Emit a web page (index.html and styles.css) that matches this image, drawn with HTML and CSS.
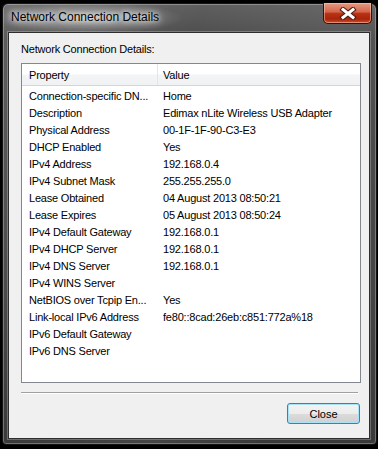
FILE: index.html
```html
<!DOCTYPE html>
<html lang="en">
<head>
  <meta charset="UTF-8">
  <title>Network Connection Details</title>
  <link rel="stylesheet" href="styles.css">
</head>
<body>
  <!-- Dialog window -->
  <div class="window">
    <div class="titlebar">
      <span class="title">Network Connection Details</span>
      <button class="caption-close" aria-label="Close">
        <svg width="18" height="13" viewBox="0 0 18 13">
          <path d="M4 2.5 L14 10.5 M14 2.5 L4 10.5" stroke="#4a1d14" stroke-width="5" stroke-linecap="square"/>
          <path d="M4 2.5 L14 10.5 M14 2.5 L4 10.5" stroke="#ffffff" stroke-width="3" stroke-linecap="square"/>
        </svg>
      </button>
    </div>

    <div class="client">
      <p class="label">Network Connection Details:</p>

      <!-- Property list -->
      <div class="listview">
        <div class="lv-header">
          <div class="lv-col first">Property</div>
          <div class="lv-col">Value</div>
        </div>
        <div class="lv-body">
          <div class="lv-row"><span>Connection-specific DN...</span><span>Home</span></div>
          <div class="lv-row"><span>Description</span><span>Edimax nLite Wireless USB Adapter</span></div>
          <div class="lv-row"><span>Physical Address</span><span>00-1F-1F-90-C3-E3</span></div>
          <div class="lv-row"><span>DHCP Enabled</span><span>Yes</span></div>
          <div class="lv-row"><span>IPv4 Address</span><span>192.168.0.4</span></div>
          <div class="lv-row"><span>IPv4 Subnet Mask</span><span>255.255.255.0</span></div>
          <div class="lv-row"><span>Lease Obtained</span><span>04 August 2013 08:50:21</span></div>
          <div class="lv-row"><span>Lease Expires</span><span>05 August 2013 08:50:24</span></div>
          <div class="lv-row"><span>IPv4 Default Gateway</span><span>192.168.0.1</span></div>
          <div class="lv-row"><span>IPv4 DHCP Server</span><span>192.168.0.1</span></div>
          <div class="lv-row"><span>IPv4 DNS Server</span><span>192.168.0.1</span></div>
          <div class="lv-row"><span>IPv4 WINS Server</span><span></span></div>
          <div class="lv-row"><span>NetBIOS over Tcpip En...</span><span>Yes</span></div>
          <div class="lv-row"><span>Link-local IPv6 Address</span><span>fe80::8cad:26eb:c851:772a%18</span></div>
          <div class="lv-row"><span>IPv6 Default Gateway</span><span></span></div>
          <div class="lv-row"><span>IPv6 DNS Server</span><span></span></div>
        </div>
      </div>

      <hr class="separator">

      <div class="actions">
        <button class="btn default">Close</button>
      </div>
    </div>
  </div>
</body>
</html>
```

FILE: styles.css
```css
/* Reset */
* {
  margin: 0;
  padding: 0;
  box-sizing: border-box;
}
html, body {
  width: 100%;
  height: 100%;
  background: #000;
  overflow: hidden;
}
body {
  padding: 3px 1px 4px 2px;
  font-family: "Liberation Sans", Arial, sans-serif;
  color: #000;
}

/* Aero window frame */
.window {
  width: 375px;
  height: 442px;
  display: flex;
  flex-direction: column;
  padding: 0 6px 5px 5px;
  border: 1px solid #141414;
  border-radius: 6px 6px 4px 4px;
  background:
    radial-gradient(ellipse 95px 16px at 85px 14px, rgba(235,235,235,0.55) 0%, rgba(200,200,200,0.25) 60%, rgba(255,255,255,0) 100%),
    linear-gradient(115deg, rgba(255,255,255,0.10) 0%, rgba(255,255,255,0) 35%, rgba(255,255,255,0.06) 60%, rgba(255,255,255,0) 80%),
    linear-gradient(to bottom, #5f5f5f 0%, #4c4c4c 8%, #464646 60%, #3a3a3a 100%);
  box-shadow: inset 0 0 0 1px rgba(255,255,255,0.28);
}

.titlebar {
  height: 28px;
  display: flex;
  justify-content: space-between;
  align-items: flex-start;
}
.title {
  margin: 5px 0 0 3px;
  font-size: 12px;
  line-height: 16px;
  color: #000;
  text-shadow: 0 0 5px #fff, 0 0 9px rgba(255,255,255,0.9), 0 0 14px rgba(255,255,255,0.7);
}
.caption-close {
  width: 49px;
  height: 21px;
  margin: -1px -2px 0 0;
  display: flex;
  align-items: center;
  justify-content: center;
  border: 1px solid #3b0f08;
  border-top: none;
  border-radius: 0 0 5px 5px;
  background: linear-gradient(to bottom, #e49c86 0%, #d2654a 45%, #bb3216 52%, #a92409 80%, #c9502f 100%);
  box-shadow: inset 0 0 0 1px rgba(255,210,190,0.5);
}

/* Client area */
.client {
  flex: 1;
  display: flex;
  flex-direction: column;
  padding: 9px 8px 0 12px;
  background: #f0f0f0;
  border: 1px solid #2e2e2e;
  box-shadow: 0 0 0 1px rgba(255,255,255,0.25);
}
.label {
  font-size: 11px;
  line-height: 15px;
  letter-spacing: -0.2px;
}

/* List view */
.listview {
  margin-top: 6px;
  height: 320px;
  background: #fff;
  border: 1px solid #828790;
  font-size: 11px;
  letter-spacing: -0.2px;
}
.lv-header {
  height: 22px;
  display: grid;
  grid-template-columns: 136px 1fr;
  align-items: center;
  background: linear-gradient(to bottom, #ffffff 0%, #ffffff 45%, #f3f4f6 55%, #f1f2f4 100%);
  border-bottom: 1px solid #d5d5d5;
}
.lv-col {
  height: 100%;
  display: flex;
  align-items: center;
  padding-left: 5px;
}
.lv-col.first {
  padding-left: 7px;
  border-right: 1px solid #e3e5e8;
}
.lv-body {
  padding-top: 2px;
}
.lv-row {
  height: 17px;
  line-height: 17px;
  display: grid;
  grid-template-columns: 136px 1fr;
}
.lv-row span {
  white-space: nowrap;
  overflow: hidden;
  padding-left: 5px;
}
.lv-row span:first-child {
  padding-left: 7px;
}

/* Bottom bar */
.separator {
  width: 337px;
  margin-top: 9px;
  border: none;
  border-top: 1px solid #a0a0a0;
  border-bottom: 1px solid #fff;
}
.actions {
  display: flex;
  justify-content: flex-end;
  margin-top: 9px;
  padding-right: 1px;
}
.btn {
  width: 73px;
  height: 21px;
  font-family: "Liberation Sans", Arial, sans-serif;
  font-size: 11px;
  color: #000;
  border: 1px solid #707070;
  border-radius: 3px;
  background: linear-gradient(to bottom, #f2f2f2 0%, #ebebeb 50%, #dddddd 50%, #cfcfcf 100%);
}
.btn.default {
  border-color: #3c7fb1;
  box-shadow: inset 0 0 0 1px #a8e2f7;
  background: linear-gradient(to bottom, #f4f4f4 0%, #ececec 50%, #dcdcdc 50%, #d0d0d0 100%);
}
```
